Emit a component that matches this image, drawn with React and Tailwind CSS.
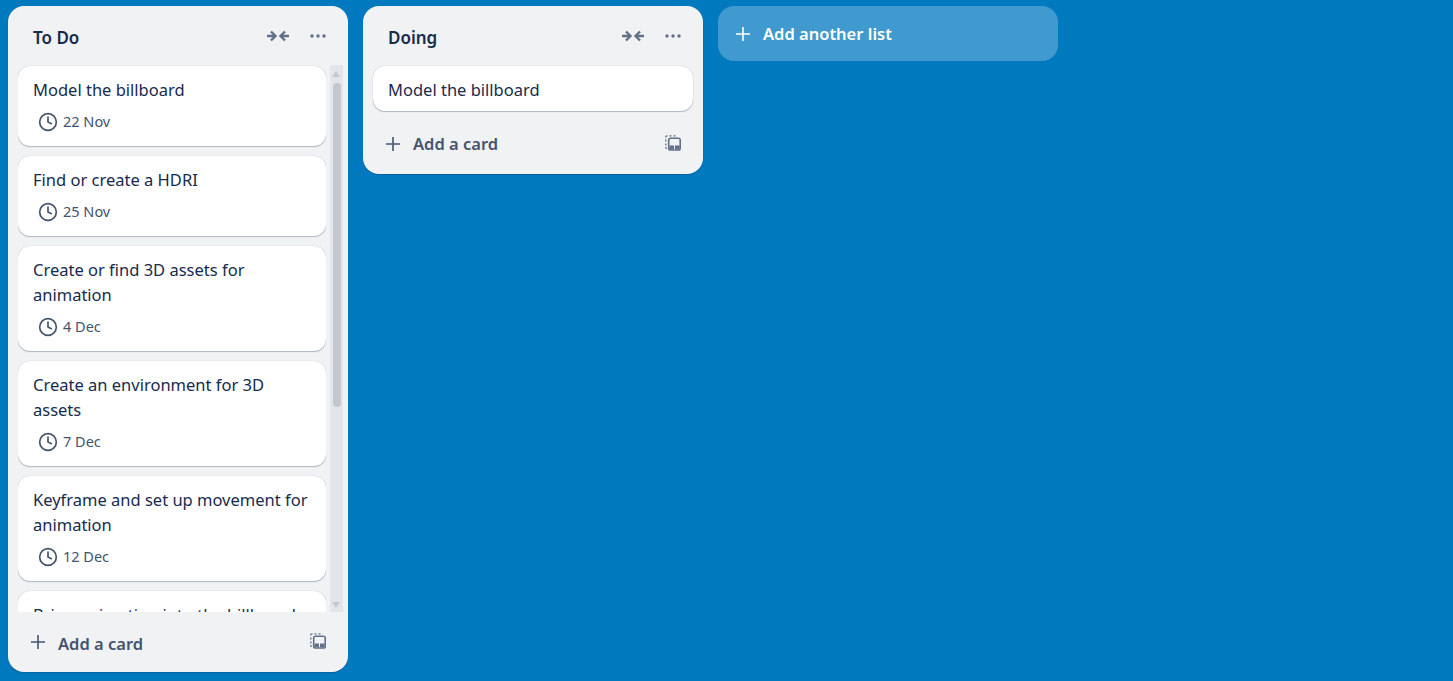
import React from 'react';
import { Clock } from 'lucide-react';

const todoCards = [
  { title: 'Model the billboard', date: '22 Nov' },
  { title: 'Find or create a HDRI', date: '25 Nov' },
  { title: 'Create or find 3D assets for animation', date: '4 Dec' },
  { title: 'Create an environment for 3D assets', date: '7 Dec' },
  { title: 'Keyframe and set up movement for animation', date: '12 Dec' },
  { title: 'Bring animation into the billboard', date: '15 Dec' }
];

function PlusIcon({ color }) {
  return (
    <svg width="16" height="16" viewBox="0 0 16 16" fill="none" stroke={color} strokeWidth="1.6" className="shrink-0">
      <path d="M8 1v14M1 8h14" />
    </svg>
  );
}

function CollapseIcon() {
  return (
    <svg width="22" height="12" viewBox="0 0 22 12" fill="none" stroke="#626f86" strokeWidth="2.4">
      <path d="M0 6h7M4 1.5 8.5 6 4 10.5" />
      <path d="M22 6h-7M18 1.5 13.5 6l4.5 4.5" />
    </svg>
  );
}

function DotsIcon() {
  return (
    <svg width="16" height="4" viewBox="0 0 16 4" fill="#626f86">
      <circle cx="2" cy="2" r="1.7" />
      <circle cx="8" cy="2" r="1.7" />
      <circle cx="14" cy="2" r="1.7" />
    </svg>
  );
}

function TemplateIcon() {
  return (
    <svg width="16" height="16" viewBox="0 0 16 16" fill="none" className="mb-[2px]">
      <path d="M2.5 .8H1.8a1 1 0 0 0-1 1v.7M.8 4.5v2M.8 8.5v2M.8 12v.7a1 1 0 0 0 1 .8M4.5 .8h2M8.5 .8h2" stroke="#626f86" strokeWidth="1.3" />
      <rect x="3.7" y="3.2" width="11.5" height="11.8" rx="1.8" fill="#f1f2f4" stroke="#626f86" strokeWidth="1.6" />
      <rect x="4.5" y="10.5" width="4.5" height="3.7" fill="#626f86" />
      <rect x="10" y="10.5" width="4.5" height="3.7" fill="#626f86" />
    </svg>
  );
}

function Card({ title, date }) {
  return (
    <div className="shrink-0 rounded-xl bg-white px-[15px] pt-[11px] pb-[9px] shadow-[0_1px_1px_#091e4240,0_0_1px_#091e424f]">
      <div className="text-[16.5px] leading-[25px] text-[#172b4d]">{title}</div>
      {date && (
        <div className="mt-[10px] mb-[5px] ml-[5px] flex h-[20px] items-center gap-[5px] text-[14.5px] text-[#44546f]">
          <Clock size={20} color="#44546f" strokeWidth={2} />
          <span>{date}</span>
        </div>
      )}
    </div>
  );
}

function ListHeader({ title }) {
  return (
    <div className="flex h-[59px] items-center pl-[25px] pr-[22px]">
      <h2 className="flex-1 pt-[4px] text-[17px] font-semibold text-[#172b4d]">{title}</h2>
      <CollapseIcon />
      <div className="ml-[21px]"><DotsIcon /></div>
    </div>
  );
}

function ListFooter({ className, labelClass }) {
  return (
    <div className={`flex items-center justify-between pl-[22px] pr-[22px] ${className}`}>
      <div className="flex items-center gap-[12px] text-[16.5px] font-semibold text-[#44546f]">
        <PlusIcon color="#44546f" />
        <span className={labelClass}>Add a card</span>
      </div>
      <TemplateIcon />
    </div>
  );
}

export default function App() {
  return (
    <div
      className="flex h-[681px] items-start gap-[15px] overflow-hidden bg-[#0079bf] pl-[8px] pt-[6px]"
      style={{ fontFamily: '"Noto Sans", "Open Sans", sans-serif' }}
    >
      <section className="flex h-[666px] w-[340px] shrink-0 flex-col rounded-2xl bg-[#f1f2f4] shadow-[0_1px_1px_#091e4240]">
        <ListHeader title="To Do" />
        <div className="flex min-h-0 flex-1">
          <div className="ml-[10px] flex w-[308px] flex-col gap-[10px] overflow-hidden pt-[1px]">
            {todoCards.map(card => (
              <Card key={card.title} title={card.title} date={card.date} />
            ))}
          </div>
          <div className="relative ml-[4px] w-[13px] bg-[#e4e5ea]">
            <div className="absolute left-[2px] top-[6px] h-0 w-0 border-x-[4px] border-b-[6px] border-x-transparent border-b-[#c4c7cf]" />
            <div className="absolute left-[3px] top-[18px] h-[324px] w-[8px] rounded-full bg-[#c4c7d0]" />
            <div className="absolute bottom-[4px] left-[2px] h-0 w-0 border-x-[4px] border-t-[6px] border-x-transparent border-t-[#c4c7cf]" />
          </div>
        </div>
        <ListFooter className="h-[60px]" labelClass="pt-[5px]" />
      </section>

      <section className="flex w-[340px] shrink-0 flex-col rounded-2xl bg-[#f1f2f4] shadow-[0_1px_1px_#091e4240]">
        <ListHeader title="Doing" />
        <div className="mx-[10px] flex flex-col pt-[1px]">
          <Card title="Model the billboard" />
        </div>
        <ListFooter className="h-[63px] pt-[3px]" labelClass="pt-[1px]" />
      </section>

      <div className="flex h-[55px] w-[340px] shrink-0 items-center gap-[12px] rounded-2xl bg-[#ffffff40] pl-[17px] text-[16.5px] font-semibold text-white">
        <PlusIcon color="#ffffff" />
        <span className="pt-[2px]">Add another list</span>
      </div>
    </div>
  );
}
